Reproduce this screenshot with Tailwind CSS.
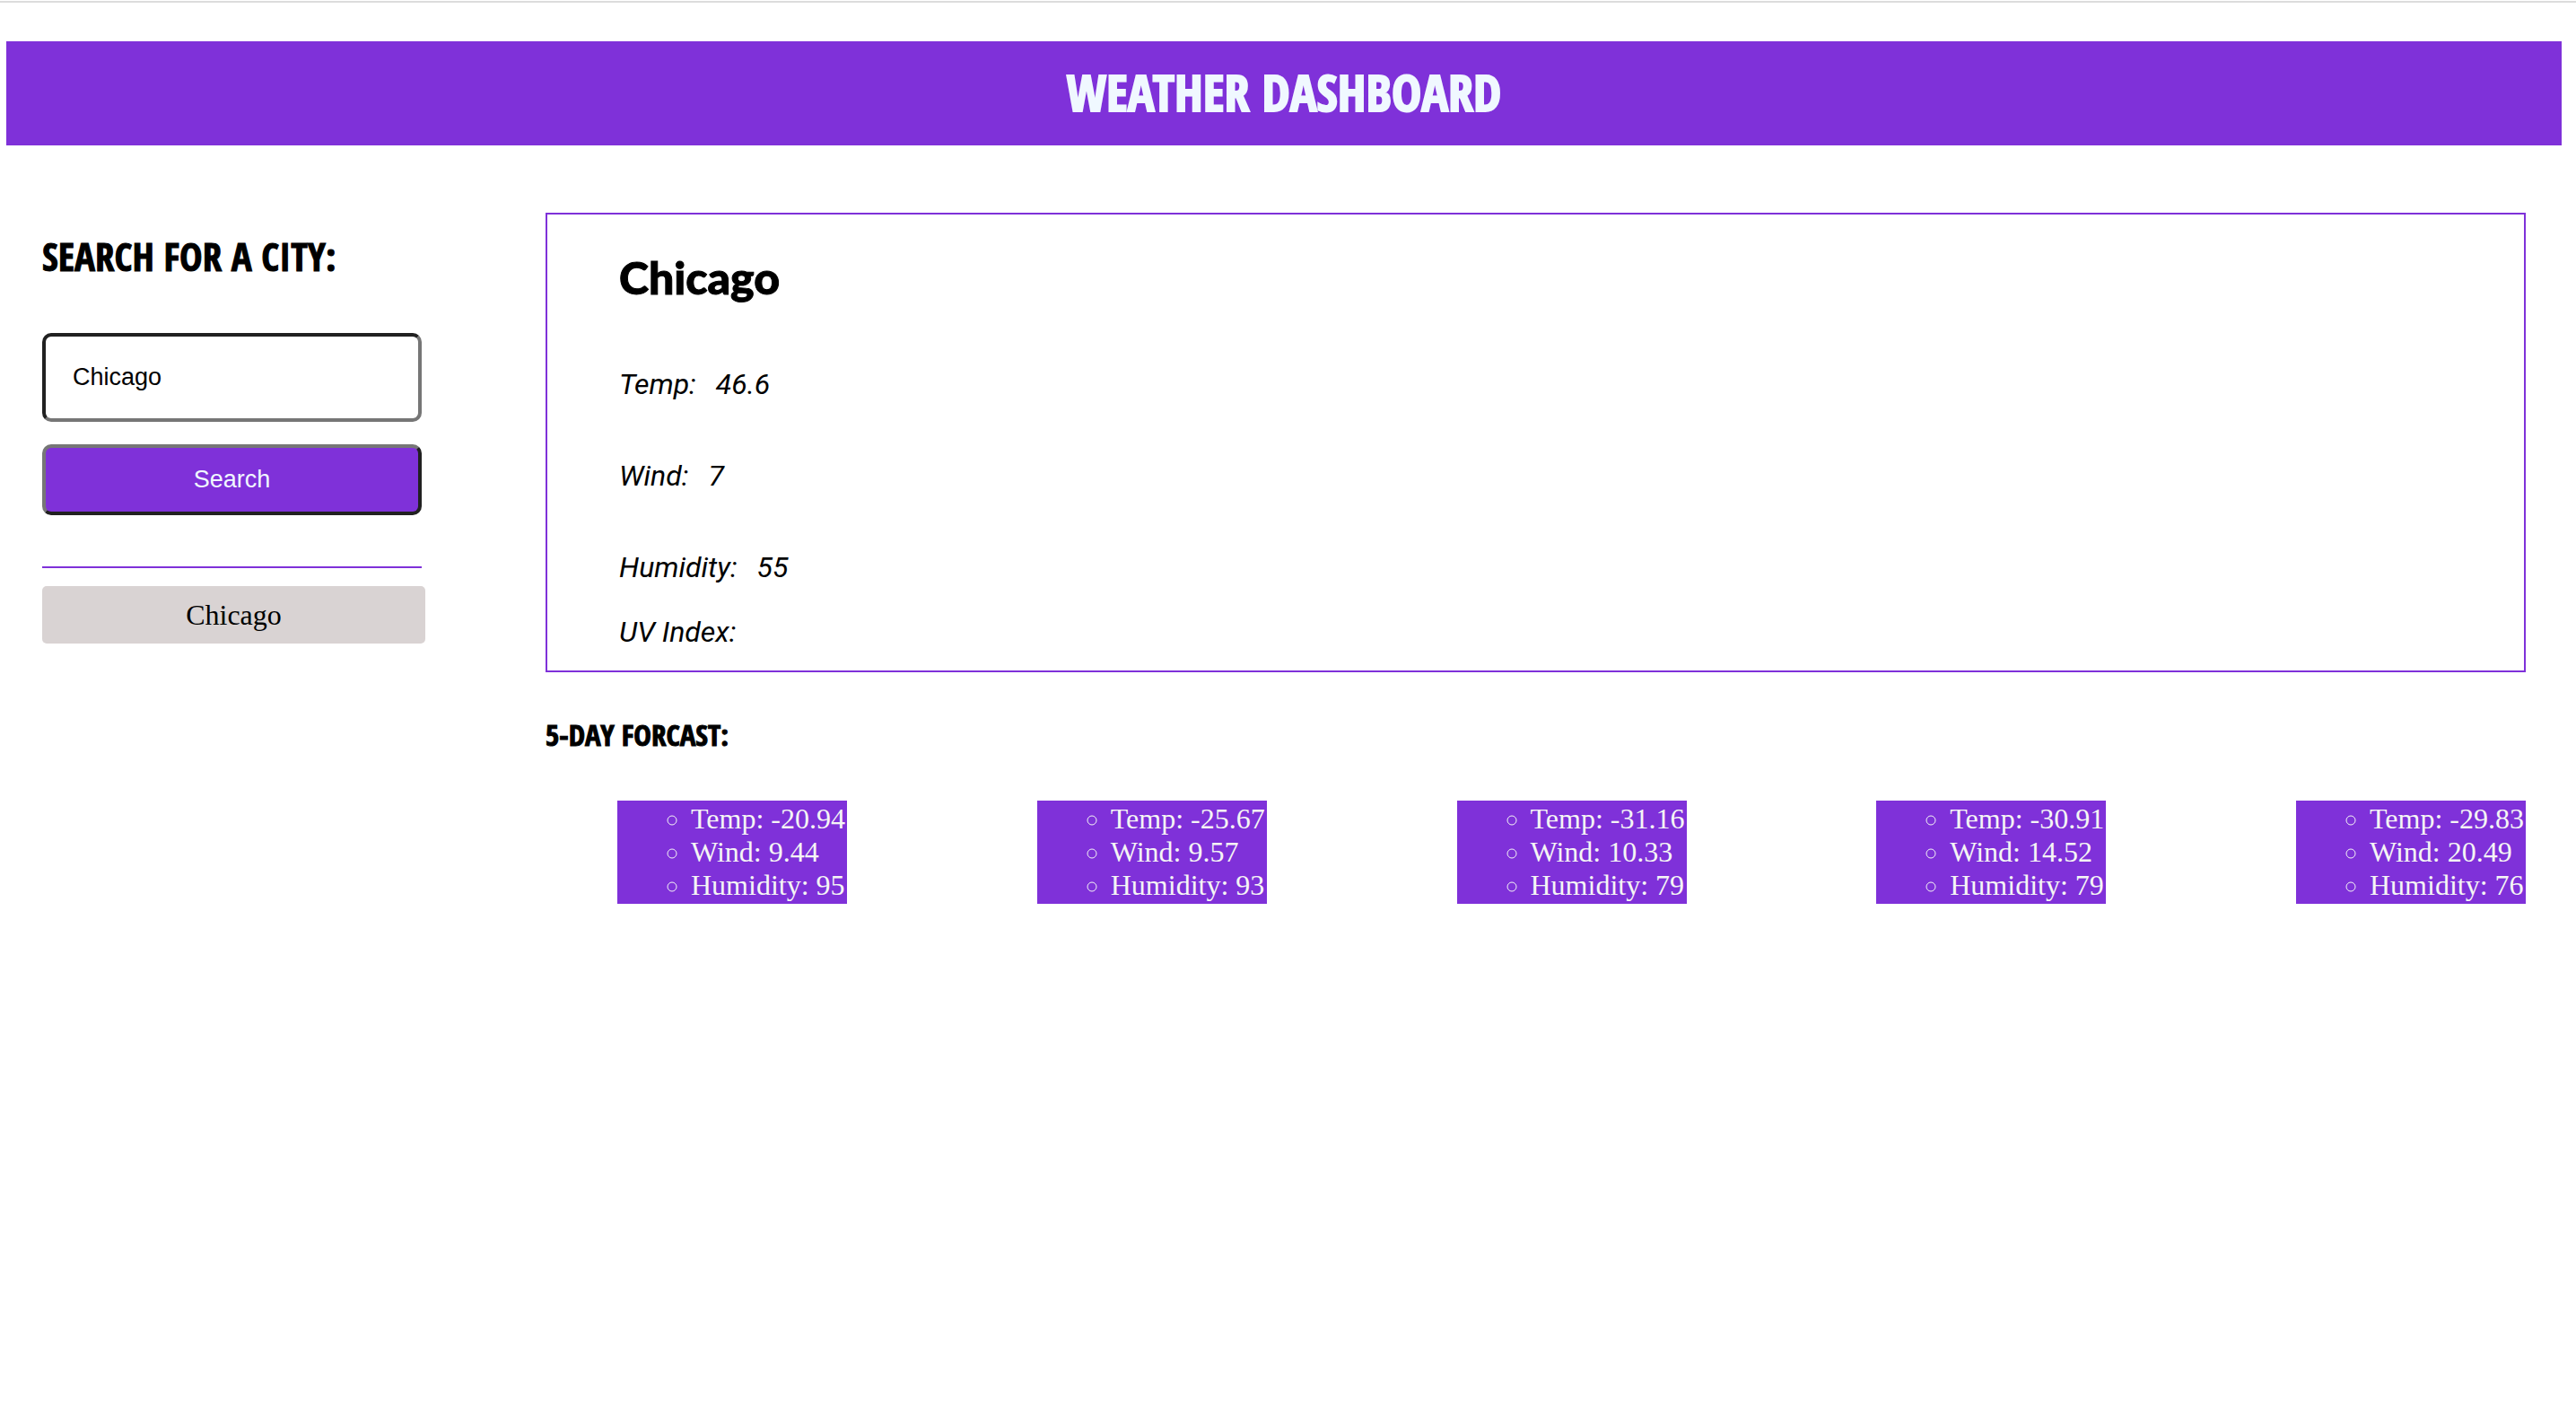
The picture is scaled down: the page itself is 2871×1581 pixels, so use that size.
<!DOCTYPE html>
<html lang="en">
<head>
<meta charset="utf-8">
<meta name="viewport" content="width=device-width, initial-scale=1">
<title>Weather Dashboard</title>
<script src="https://cdn.jsdelivr.net/npm/@tailwindcss/browser@4"></script>
</head>
<body class="bg-white pt-px font-['Liberation_Serif',serif] text-[32px] text-black">
<header class="border-t-2 border-[#dcdcdc] pt-[43px] pr-4 pl-[7px]">
  <h1 class="flex h-[116px] items-center justify-center bg-[#7f31d9] pb-1 font-['Open_Sans_Condensed',sans-serif] text-[56px] font-bold text-[#f0f8ff] [-webkit-text-stroke:2px]">WEATHER DASHBOARD</h1>
</header>

<div class="mt-[75px] flex items-start gap-[134px] pr-14 pl-[47px]">
  <aside class="w-[427px] shrink-0 pt-6">
    <form class="mr-1" onsubmit="return false">
      <label for="city" class="block font-['Open_Sans_Condensed',sans-serif] text-[43px] leading-[50px] font-bold [-webkit-text-stroke:1px]">SEARCH FOR A CITY:</label>
      <input id="city" type="text" value="Chicago" class="mt-[60px] block h-[99px] w-full rounded-[10px] border-4 border-t-[#212121] border-r-[#767676] border-b-[#767676] border-l-[#212121] bg-white px-[30px] font-['Liberation_Sans',sans-serif] text-[27px] outline-none">
      <button type="submit" class="mt-[25px] block h-[79px] w-full rounded-[10px] border-4 border-t-[#767676] border-r-[#212121] border-b-[#212121] border-l-[#767676] bg-[#7f31d9] font-['Liberation_Sans',sans-serif] text-[27px] text-[#f0f8ff]">Search</button>
    </form>
    <hr class="mt-[57px] mr-1 border-t-2 border-[#7f31d9]">
    <button type="button" class="mt-5 block h-16 w-full rounded-[5px] bg-[#d9d3d3]">Chicago</button>
  </aside>

  <main class="min-w-0 flex-1">
    <section class="border-2 border-[#7f31d9] pt-10 pb-6 pl-20">
      <h2 class="font-['Lato',sans-serif] text-[50px] leading-[60px] font-black [-webkit-text-stroke:1px]">Chicago</h2>
      <dl class="mt-[70px] font-['Roboto',sans-serif] leading-[38px] italic">
        <div class="flex gap-[22px]"><dt>Temp:</dt><dd>46.6</dd></div>
        <div class="mt-16 flex gap-[22px]"><dt>Wind:</dt><dd>7</dd></div>
        <div class="mt-16 flex gap-[22px]"><dt>Humidity:</dt><dd>55</dd></div>
        <div class="mt-[34px] flex gap-[22px]"><dt>UV Index:</dt><dd></dd></div>
      </dl>
    </section>

    <h3 class="mt-[50px] font-['Open_Sans_Condensed',sans-serif] text-[33px] leading-[40px] font-bold [-webkit-text-stroke:1px]">5-DAY FORCAST:</h3>
    <div class="mt-[53px] flex justify-between pl-20 leading-[37px] whitespace-nowrap text-[#f5f5f5]">
      <ul class="w-64 list-[circle] bg-[#7f31d9] py-[2px] pl-[82px]">
        <li>Temp: -20.94</li>
        <li>Wind: 9.44</li>
        <li>Humidity: 95</li>
      </ul>
      <ul class="w-64 list-[circle] bg-[#7f31d9] py-[2px] pl-[82px]">
        <li>Temp: -25.67</li>
        <li>Wind: 9.57</li>
        <li>Humidity: 93</li>
      </ul>
      <ul class="w-64 list-[circle] bg-[#7f31d9] py-[2px] pl-[82px]">
        <li>Temp: -31.16</li>
        <li>Wind: 10.33</li>
        <li>Humidity: 79</li>
      </ul>
      <ul class="w-64 list-[circle] bg-[#7f31d9] py-[2px] pl-[82px]">
        <li>Temp: -30.91</li>
        <li>Wind: 14.52</li>
        <li>Humidity: 79</li>
      </ul>
      <ul class="w-64 list-[circle] bg-[#7f31d9] py-[2px] pl-[82px]">
        <li>Temp: -29.83</li>
        <li>Wind: 20.49</li>
        <li>Humidity: 76</li>
      </ul>
    </div>
  </main>
</div>
</body>
</html>
